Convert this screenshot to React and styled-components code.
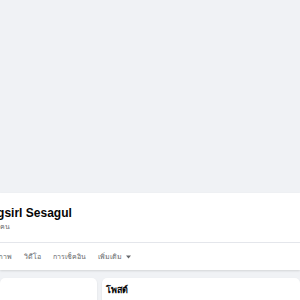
import React from 'react';
import styled, { createGlobalStyle } from 'styled-components';

const GlobalStyle = createGlobalStyle`
  html, body {
    margin: 0;
    padding: 0;
    background: #f0f2f5;
    overflow: hidden;
  }
  body {
    font-family: "Liberation Sans", "Noto Sans", sans-serif;
    color: #050505;
  }
`;

const Page = styled.div`
  width: 300px;
  height: 300px;
  overflow: hidden;
`;

const Cover = styled.div`
  height: 193px;
  background: #f0f2f5;
`;

const Header = styled.header`
  background: #fff;
  box-shadow: 0 1px 2px rgba(0, 0, 0, 0.12);
`;

const Intro = styled.div`
  height: 50px;
  padding-top: 13px;
  box-sizing: border-box;
  border-bottom: 1px solid #e4e6eb;
  white-space: nowrap;
`;

const Name = styled.h1`
  margin: 0 0 0 ${({ shift }) => shift}px;
  font-size: 12px;
  line-height: 15px;
  font-weight: 700;
  white-space: nowrap;
`;

const Friends = styled.div`
  margin: 1px 0 0 ${({ shift }) => shift}px;
  font-size: 7px;
  line-height: 10px;
  color: #65676b;
`;

const Tabs = styled.nav`
  display: flex;
  align-items: center;
  height: 27px;
  gap: 12px;
  margin-left: ${({ shift }) => shift}px;
  white-space: nowrap;
`;

const Tab = styled.span`
  font-size: 7px;
  color: #65676b;
  font-weight: 400;
  display: inline-flex;
  align-items: center;
  gap: 4px;
`;

const Body = styled.main`
  display: flex;
  gap: 5px;
  padding-top: 8px;
`;

const Card = styled.section`
  background: #fff;
  border-radius: 5px;
  box-shadow: 0 1px 2px rgba(0, 0, 0, 0.1);
  height: 40px;
  width: ${({ w }) => (w ? `${w}px` : 'auto')};
  flex: ${({ w }) => (w ? 'none' : '1')};
  padding: 5px 4px;
  box-sizing: border-box;
`;

const CardTitle = styled.h2`
  margin: 0;
  font-size: 9px;
  font-weight: 700;
`;

const Caret = () => (
  <svg width="5" height="4" viewBox="0 0 10 6">
    <path d="M0 0h10L5 6z" fill="#65676b" />
  </svg>
);

export default function App() {
  return (
    <Page>
      <GlobalStyle />
      <Cover />
      <Header>
        <Intro>
          <Name shift={-24}>Tongsirl Sesagul</Name>
          <Friends shift={-37}>เพื่อน 1,234 คน</Friends>
        </Intro>
        <Tabs shift={-102}>
          <Tab>โพสต์</Tab>
          <Tab>เกี่ยวกับ</Tab>
          <Tab>เพื่อน</Tab>
          <Tab>รูปภาพ</Tab>
          <Tab>วิดีโอ</Tab>
          <Tab>การเช็คอิน</Tab>
          <Tab>
            เพิ่มเติม <Caret />
          </Tab>
        </Tabs>
      </Header>
      <Body>
        <Card w={97} />
        <Card>
          <CardTitle>โพสต์</CardTitle>
        </Card>
      </Body>
    </Page>
  );
}
